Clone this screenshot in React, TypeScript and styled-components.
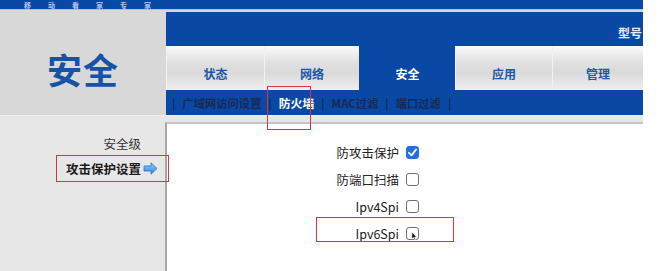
import React from "react";
import { createGlobalStyle, styled } from "styled-components";

const GlobalStyle = createGlobalStyle`
  html, body {
    margin: 0;
    padding: 0;
    background: #fff;
  }
  body {
    font-family: "Noto Sans CJK SC", "Noto Sans", sans-serif;
    overflow: hidden;
  }
`;

const tabs = [
  { label: "状态", width: 98 },
  { label: "网络", width: 95 },
  { label: "安全", width: 96, active: true },
  { label: "应用", width: 97 },
  { label: "管理", width: 91 },
];

const subLinks = [
  { label: "广域网访问设置" },
  { label: "防火墙", active: true },
  { label: "MAC过滤" },
  { label: "端口过滤" },
];

const options = [
  { label: "防攻击保护", checked: true },
  { label: "防端口扫描", checked: false },
  { label: "Ipv4Spi", checked: false },
  { label: "Ipv6Spi", checked: false },
];

function ArrowIcon() {
  return (
    <svg width="15" height="13" viewBox="0 0 15 13">
      <defs>
        <linearGradient id="arr" x1="0" y1="0" x2="0" y2="1">
          <stop offset="0" stopColor="#8fd0ff" />
          <stop offset="1" stopColor="#2a86dc" />
        </linearGradient>
      </defs>
      <path
        d="M1 4 H8 V0.8 L14 6.5 L8 12.2 V9 H1 Z"
        fill="url(#arr)"
        stroke="#2f6fb8"
        strokeWidth="0.8"
        strokeLinejoin="round"
      />
    </svg>
  );
}

function Cursor() {
  return (
    <svg width="7" height="10" viewBox="0 0 7 10">
      <path
        d="M0.8 0.8 V8 L2.4 6.6 L3.5 9 L4.6 8.5 L3.6 6.2 H5.8 Z"
        fill="#111"
        stroke="#fff"
        strokeWidth="0.7"
        strokeLinejoin="round"
      />
    </svg>
  );
}

export default function App() {
  return (
    <Page>
      <GlobalStyle />
      <Frame>
        <TopStrip>
          <TopText>
            {["移", "动", "看", "家", "专", "家"].map((c, i) => (
              <span key={i}>{c}</span>
            ))}
          </TopText>
        </TopStrip>
        <HeaderRow>
          <LogoPanel>
            <LogoText>安全</LogoText>
          </LogoPanel>
          <HeaderRight>
            <TitleBar>
              <Model>型号</Model>
            </TitleBar>
            <TabRow>
              {tabs.map((t) => (
                <Tab key={t.label} $active={!!t.active} style={{ width: t.width }}>
                  {t.label}
                </Tab>
              ))}
            </TabRow>
            <SubNav>
              <Sep>|</Sep>
              {subLinks.map((s) => (
                <React.Fragment key={s.label}>
                  <SubLink $active={!!s.active}>{s.label}</SubLink>
                  <Sep>|</Sep>
                </React.Fragment>
              ))}
            </SubNav>
          </HeaderRight>
        </HeaderRow>
        <Body>
          <Sidebar>
            <SideItem>
              安全级
              <IconSlot />
            </SideItem>
            <SideItem $bold>
              攻击保护设置
              <IconSlot>
                <ArrowIcon />
              </IconSlot>
            </SideItem>
          </Sidebar>
          <ContentWrap>
            <Content>
              <OptionGrid>
                {options.map((o) => (
                  <React.Fragment key={o.label}>
                    <OptLabel>{o.label}</OptLabel>
                    <Box $checked={o.checked}>
                      {o.checked && (
                        <svg width="11" height="11" viewBox="0 0 11 11">
                          <path
                            d="M2 5.8 L4.5 8.3 L9 2.6"
                            fill="none"
                            stroke="#fff"
                            strokeWidth="1.9"
                            strokeLinecap="round"
                            strokeLinejoin="round"
                          />
                        </svg>
                      )}
                    </Box>
                  </React.Fragment>
                ))}
              </OptionGrid>
            </Content>
          </ContentWrap>
        </Body>
      </Frame>
      <Mark style={{ left: 267, top: 86, width: 44, height: 44 }} />
      <Mark style={{ left: 56, top: 155, width: 113, height: 27 }} />
      <Mark style={{ left: 316, top: 217, width: 138, height: 25 }} />
      <CursorWrap>
        <Cursor />
      </CursorWrap>
    </Page>
  );
}

const Page = styled.div`
  position: relative;
  width: 660px;
  height: 271px;
  overflow: hidden;
  background: #fff;
`;

const Frame = styled.div`
  width: 643px;
  height: 271px;
  display: flex;
  flex-direction: column;
`;

const TopStrip = styled.div`
  height: 9px;
  background: #0a48a6;
  border-bottom: 1px solid #a9bfe3;
  display: flex;
  align-items: flex-end;
`;

const TopText = styled.div`
  display: flex;
  gap: 17px;
  padding-left: 24px;
  font-size: 7px;
  line-height: 8px;
  font-weight: 700;
  color: #b9c9e8;
`;

const HeaderRow = styled.div`
  display: flex;
  height: 105px;
`;

const LogoPanel = styled.div`
  width: 166px;
  background: #d8d8d8;
  display: flex;
  align-items: center;
  justify-content: center;
  padding-top: 12px;
  box-sizing: border-box;
`;

const LogoText = styled.div`
  font-size: 35px;
  font-weight: 700;
  color: #1652a6;
  letter-spacing: 1px;
`;

const HeaderRight = styled.div`
  flex: 1;
  display: flex;
  flex-direction: column;
  background: #d8d8d8;
  padding-top: 2px;
`;

const TitleBar = styled.div`
  height: 33px;
  background: #0a48a6;
  display: flex;
  justify-content: flex-end;
  align-items: flex-start;
  overflow: hidden;
`;

const Model = styled.div`
  margin-top: 12px;
  margin-right: 1px;
  font-size: 12px;
  font-weight: 700;
  color: #e6ecf7;
`;

const TabRow = styled.div`
  display: flex;
  height: 45px;
  background: #0a48a6;
`;

const Tab = styled.div<{ $active: boolean }>`
  box-sizing: border-box;
  display: flex;
  justify-content: center;
  align-items: center;
  padding-top: 10px;
  margin-top: 1px;
  font-size: 12px;
  font-weight: 700;
  color: ${(p) => (p.$active ? "#ffffff" : "#1b57a8")};
  background: ${(p) =>
    p.$active
      ? "#0a48a6"
      : "linear-gradient(#fbfbfb 0%, #e2e2e2 35%, #d9d9d9 60%, #eeeeee 100%)"};
  border-left: 1px solid ${(p) => (p.$active ? "#0a48a6" : "#f2f2f2")};
`;

const SubNav = styled.div`
  height: 25px;
  background: #0a48a6;
  display: flex;
  align-items: center;
  padding-left: 6px;
  gap: 7px;
  font-size: 11.3px;
  font-weight: 700;
`;

const Sep = styled.span`
  color: #1a2954;
`;

const SubLink = styled.span<{ $active: boolean }>`
  color: ${(p) => (p.$active ? "#ffffff" : "#1a2954")};
  font-size: ${(p) => (p.$active ? "11.8px" : "11.3px")};
`;

const Body = styled.div`
  flex: 1;
  display: flex;
  background: #e7e7e7;
  border-top: 1px solid #efefef;
`;

const Sidebar = styled.div`
  width: 166px;
  box-sizing: border-box;
  padding: 15px 8px 0 0;
  display: flex;
  flex-direction: column;
  align-items: flex-end;
`;

const SideItem = styled.div<{ $bold?: boolean }>`
  height: 25px;
  display: flex;
  align-items: center;
  gap: 2px;
  font-size: 12.5px;
  font-weight: ${(p) => (p.$bold ? 700 : 400)};
  color: ${(p) => (p.$bold ? "#1a1a1a" : "#333")};
`;

const IconSlot = styled.span`
  width: 15px;
  height: 13px;
  display: flex;
`;

const ContentWrap = styled.div`
  flex: 1;
  padding-top: 6px;
  display: flex;
`;

const Content = styled.div`
  flex: 1;
  background: #fff;
  border-top: 2px solid #c4c4c4;
  border-left: 2px solid #a8a8a8;
  margin-left: -1px;
  padding-top: 15px;
`;

const OptionGrid = styled.div`
  display: grid;
  grid-template-columns: 232px auto;
  grid-auto-rows: 27px;
  column-gap: 7px;
  align-items: center;
`;

const OptLabel = styled.div`
  text-align: right;
  font-size: 12.5px;
  color: #222;
`;

const Box = styled.div<{ $checked: boolean }>`
  width: 13px;
  height: 13px;
  box-sizing: border-box;
  border-radius: 3px;
  display: flex;
  align-items: center;
  justify-content: center;
  background: ${(p) => (p.$checked ? "#1f6fe5" : "#fff")};
  border: 1px solid ${(p) => (p.$checked ? "#1f6fe5" : "#707070")};
`;

const Mark = styled.div`
  position: absolute;
  box-sizing: border-box;
  border: 1.5px solid #e0333b;
  pointer-events: none;
`;

const CursorWrap = styled.div`
  position: absolute;
  left: 411px;
  top: 231px;
  display: flex;
`;
